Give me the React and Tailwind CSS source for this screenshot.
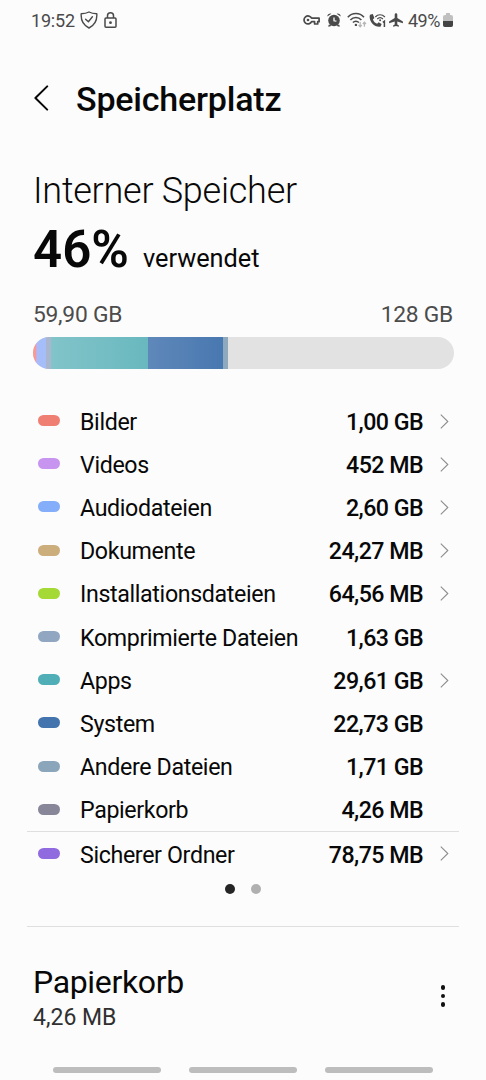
import React from 'react';

const categories = [
    { name: 'Bilder', size: '1,00 GB', color: 'bg-[#f07f73]', link: true },
    { name: 'Videos', size: '452 MB', color: 'bg-[#c795f0]', link: true },
    { name: 'Audiodateien', size: '2,60 GB', color: 'bg-[#85aefa]', link: true },
    { name: 'Dokumente', size: '24,27 MB', color: 'bg-[#cbae7b]', link: true },
    { name: 'Installationsdateien', size: '64,56 MB', color: 'bg-[#a5d936]', link: true },
    { name: 'Komprimierte Dateien', size: '1,63 GB', color: 'bg-[#91a7c1]' },
    { name: 'Apps', size: '29,61 GB', color: 'bg-[#50aeb6]', link: true },
    { name: 'System', size: '22,73 GB', color: 'bg-[#4374ae]' },
    { name: 'Andere Dateien', size: '1,71 GB', color: 'bg-[#8ba6bb]' },
    { name: 'Papierkorb', size: '4,26 MB', color: 'bg-[#888799]' },
];

const StatusBar = () => (
    <div className="flex h-10 items-center justify-between pr-[33px] pl-[31px] text-[#4a4a4a]">
        <div className="flex items-center">
            <span className="w-[49px] text-[18px] tracking-[-0.2px] whitespace-nowrap">19:52</span>
            <svg className="h-[18px] w-[18px]" viewBox="0 0 18 18" fill="none" stroke="currentColor" strokeWidth="1.4" strokeLinejoin="round" strokeLinecap="round">
                <path d="M9 1 C6.8 2.2 4.2 2.7 1.2 2.7 C0.7 9.5 3.6 14.3 9 17 C14.4 14.3 17.3 9.5 16.8 2.7 C13.8 2.7 11.2 2.2 9 1 Z" />
                <path d="M5.6 8.2 L8.4 10.8 L12.4 5.8" />
            </svg>
            <svg className="ml-[6px] h-[16px] w-[13px]" viewBox="0 0 13 16" fill="none" stroke="currentColor" strokeWidth="1.5" strokeLinejoin="round">
                <rect x="1" y="6" width="11" height="9.2" rx="1" />
                <path d="M3.5 6 V3.8 A3 3 0 0 1 9.5 3.8 V6" />
                <circle cx="6.5" cy="10.7" r="1.4" fill="currentColor" stroke="none" />
            </svg>
        </div>
        <div className="flex items-center">
            {/* VPN key */}
            <svg className="h-[12px] w-[17px]" viewBox="0 0 17 12" fill="none" stroke="currentColor" strokeWidth="1.7" strokeLinejoin="round">
                <path d="M8.6 4.2 H16.1 V7.7 H14.7 V10 H11.6 V7.7 H8.6 A4 4 0 1 1 8.6 4.2 Z" />
                <circle cx="5" cy="6" r="1.3" fill="currentColor" stroke="none" />
            </svg>
            {/* alarm */}
            <svg className="ml-[7px] h-[14px] w-[14px]" viewBox="0 0 14 14" fill="currentColor">
                <circle cx="7" cy="7.5" r="5.8" />
                <path d="M0.3 3.6 A3 3 0 0 1 4.4 0.7 Z M13.7 3.6 A3 3 0 0 0 9.6 0.7 Z M2 11.5 L1 13.6 H3 L4.5 12.5 Z M12 11.5 L13 13.6 H11 L9.5 12.5 Z" />
                <path d="M7 4.6 V7.8 L9.4 8.2" fill="none" stroke="#fcfcfc" strokeWidth="1.3" />
            </svg>
            {/* wifi with traffic arrows */}
            <svg className="ml-[6px] h-[16px] w-[20px]" viewBox="0 0 20 16" fill="none" stroke="currentColor" strokeWidth="1.5">
                <path d="M0.8 5.2 C5.2 0.3 12.6 0.3 17 5.2" />
                <path d="M3.4 8 C6.4 4.7 11.4 4.7 14.4 8" />
                <path d="M5.9 10.6 C7.6 8.8 10.2 8.8 11.9 10.6" />
                <circle cx="8.9" cy="12.9" r="1.2" fill="currentColor" stroke="none" />
                <path d="M13.2 10 V14.6 M11.6 13 L13.2 14.8 L14.8 13 M17.4 14.8 V10.4 M15.8 12 L17.4 10.2 L19 12" stroke="#b5b5b5" strokeWidth="1.2" />
            </svg>
            {/* wifi calling, SIM 1 */}
            <svg className="ml-[2px] h-[15px] w-[17px]" viewBox="0 0 17 15" fill="currentColor">
                <path d="M1 1.8 L3.8 1 L5.4 4.9 L3.9 6.4 C4.8 8.5 6.1 9.9 8.1 10.7 L9.6 9.2 L12.6 11.1 L11.7 13.6 C5.4 15 -0.9 7.8 1 1.8 Z" />
                <path d="M6.3 4 C9 1 13 1 15.9 4 M8.3 6 C10 4.1 12.2 4.1 13.9 6" fill="none" stroke="currentColor" strokeWidth="1.2" />
                <circle cx="11.1" cy="7.2" r="1" />
                <path d="M13.8 9.4 L15.4 8.2 V14" fill="none" stroke="currentColor" strokeWidth="1.5" />
            </svg>
            {/* flight mode */}
            <svg className="ml-[3px] h-[14px] w-[14px]" viewBox="0 0 14 14" fill="currentColor">
                <path d="M7 0.2 C7.8 0.2 8.3 0.9 8.3 1.7 V5 L13.9 8.5 V10.2 L8.3 8.6 V11.4 L9.9 12.6 V13.8 L7 13.1 L4.1 13.8 V12.6 L5.7 11.4 V8.6 L0.1 10.2 V8.5 L5.7 5 V1.7 C5.7 0.9 6.2 0.2 7 0.2 Z" />
            </svg>
            <span className="ml-[5px] w-[35px] text-[18px] tracking-[-0.5px] whitespace-nowrap">49%</span>
            <span className="flex h-[14px] w-[10px] flex-col items-center">
                <span className="h-[2px] w-[4px] bg-[#c0c0c0]" />
                <span className="flex w-full flex-1 flex-col justify-end overflow-hidden rounded-[2px] bg-[#c0c0c0]">
                    <span className="h-[6px] bg-[#444444]" />
                </span>
            </span>
        </div>
    </div>
);

const CategoryRow = ({ item }) => (
    <div className="flex h-[43.2px] items-center pr-[4px] pl-[5px]">
        <span className={`mb-[2px] h-[11px] w-[22px] rounded-full ${item.color}`} />
        <span className="ml-[20px] flex-1 pt-px text-[23.2px] tracking-[-0.35px] whitespace-nowrap">{item.name}</span>
        <span className="pt-px text-[23.2px] font-medium tracking-[-0.55px] whitespace-nowrap">{item.size}</span>
        <span className="ml-[17px] flex w-[9px]">
            {item.link && (
                <svg className="mb-px h-[15px] w-[9px]" viewBox="0 0 9 15" fill="none" stroke="#8c8c8c" strokeWidth="1.1">
                    <path d="M0.8 0.7 L7.8 7.5 L0.8 14.3" />
                </svg>
            )}
        </span>
    </div>
);

const UsageBar = () => (
    <div className="mx-[32.5px] mt-[7px] flex h-8 overflow-hidden rounded-full bg-[#e2e2e2]">
        <div className="w-[3.5px] bg-[#f59a94]" />
        <div className="w-[1px] bg-[#cfa8e6]" />
        <div className="w-[9px] bg-[#a5bdf9]" />
        <div className="w-[5px] bg-[#a9b6cd]" />
        <div className="w-[97px] bg-linear-to-r from-[#81c4c9] to-[#69b8bf]" />
        <div className="w-[75px] bg-linear-to-r from-[#5f88ba] to-[#4878b0]" />
        <div className="w-[5px] bg-[#8ea9be]" />
    </div>
);

const App = () => {
    return (
        <div className="flex h-[1080px] w-[486px] flex-col overflow-hidden bg-[#fcfcfc] font-['Roboto',sans-serif] text-[#080808]">
            <StatusBar />

            <header className="flex h-[118px] items-center pl-[34px]">
                <svg className="mb-[3px] h-[26px] w-[16px]" viewBox="0 0 16 26" fill="none" stroke="currentColor" strokeWidth="2" strokeLinecap="round" strokeLinejoin="round">
                    <path d="M13.2 1.4 L1.4 13 L13.2 24.6" />
                </svg>
                <h1 className="ml-[26px] pt-px text-[34px] font-medium tracking-[-0.2px] whitespace-nowrap">Speicherplatz</h1>
            </header>

            <section className="pl-[33px]">
                <h2 className="mt-[8px] text-[36px] leading-[50px] font-light tracking-[-0.25px] whitespace-nowrap">Interner Speicher</h2>
                <p className="flex h-[69px] items-baseline leading-[68px] whitespace-nowrap">
                    <span className="text-[51px] font-semibold">46%</span>
                    <span className="ml-[14px] text-[25.3px]">verwendet</span>
                </p>
            </section>

            <div className="mt-[15px] flex justify-between px-[33px] text-[22.8px] leading-[30px] tracking-[-0.25px] text-[#4c4c4c]">
                <span>59,90 GB</span>
                <span>128 GB</span>
            </div>
            <UsageBar />

            <div className="mt-[31px] px-[33px]">
                {categories.map((item) => (
                    <CategoryRow key={item.name} item={item} />
                ))}
            </div>
            <div className="mx-[27px] -mt-px h-px shrink-0 bg-[#dfdfdf]" />
            <div className="mt-px px-[33px]">
                <CategoryRow item={{ name: 'Sicherer Ordner', size: '78,75 MB', color: 'bg-[#906be0]', link: true }} />
            </div>

            {/* pager */}
            <div className="mt-[8px] flex h-[10px] justify-center gap-[16px]">
                <span className="h-[10px] w-[10px] rounded-full bg-[#252525]" />
                <span className="h-[10px] w-[10px] rounded-full bg-[#b0b0b0]" />
            </div>
            <div className="mx-[27px] mt-[32px] h-px shrink-0 bg-[#dfdfdf]" />

            <div className="mt-[35px] flex items-center justify-between pr-[41px] pl-[33px]">
                <div>
                    <h3 className="text-[32px] leading-[40px] tracking-[-0.35px]">Papierkorb</h3>
                    <p className="text-[23px] leading-[32px] text-[#303030]">4,26 MB</p>
                </div>
                <div className="mb-[4px] flex flex-col gap-[4px]">
                    <span className="h-[4.5px] w-[4.5px] rounded-full bg-[#111111]" />
                    <span className="h-[4.5px] w-[4.5px] rounded-full bg-[#111111]" />
                    <span className="h-[4.5px] w-[4.5px] rounded-full bg-[#111111]" />
                </div>
            </div>

            <nav className="mt-auto mb-[7px] flex justify-center gap-[28px]">
                <span className="h-[6px] w-[108px] rounded-full bg-[#bdbdbd]" />
                <span className="h-[6px] w-[108px] rounded-full bg-[#bdbdbd]" />
                <span className="h-[6px] w-[108px] rounded-full bg-[#bdbdbd]" />
            </nav>
        </div>
    );
};

export default App;
